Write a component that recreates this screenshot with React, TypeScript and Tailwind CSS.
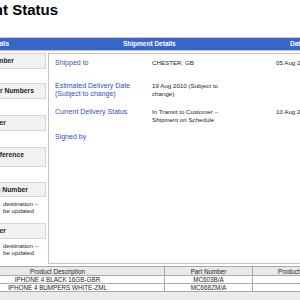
const leftBoxes = [
  { label: "Web Order Number", cut: "w-[14px]", box: "mt-[2px] h-[16px]" },
  { label: "Sales Order Numbers", cut: "w-[34px]", box: "mt-[14px] h-[16px]" },
  { label: "Customer", cut: "w-[6px]", box: "mt-[16px] h-[16px]" },
]

const shipmentRows = [
  { label: ["Shipped to"], value: ["CHESTER, GB"], date: "05 Aug 2010", row: "h-[23px]" },
  {
    label: ["Estimated Delivery Date", "(Subject to change)"],
    value: ["19 Aug 2010 (Subject to", "change)"],
    date: "",
    row: "h-[26px]",
  },
  {
    label: ["Current Delivery Status"],
    value: ["In Transit to Customer –", "Shipment on Schedule"],
    date: "10 Aug 2010",
    row: "h-[25px]",
  },
  { label: ["Signed by"], value: [], date: "", row: "h-[20px]" },
]

const products = [
  { desc: "IPHONE 4 BLACK 16GB-GBR", part: "MC603B/A", qty: "1" },
  { desc: "IPHONE 4 BUMPERS WHITE-ZML", part: "MC668ZM/A", qty: "1" },
]

// text anchored at its right edge, left part runs off the page
function Cut({ w, children }: { w: string; children: React.ReactNode }) {
  return <div className={`flex shrink-0 justify-end overflow-hidden whitespace-nowrap ${w}`}>{children}</div>
}

function LeftBox({ label, cut, box }: { label: string; cut: string; box: string }) {
  return (
    <div className={`flex w-[46px] items-center border border-l-0 border-[#d4d4d4] bg-[#f1f1f1] text-[6.8px] font-bold leading-[8px] ${box}`}>
      <Cut w={cut}>
        <span className="shrink-0">{label}</span>
      </Cut>
    </div>
  )
}

export default function App() {
  return (
    <div className="h-[300px] w-[300px] overflow-hidden bg-white font-['Liberation_Sans',Arial,sans-serif] text-[#1e1e1e]">
      <div className="h-[37px] pt-[1px]">
        <Cut w="w-[58px]">
          <h1 className="shrink-0 text-[15px] font-bold leading-[18px] text-black">Shipment Status</h1>
        </Cut>
      </div>

      <div className="flex h-[14px] items-center border-y border-t-[#c6c6c6] border-b-[#c0c0c0] bg-[#3866c9] text-[6.5px] font-bold text-white">
        <div className="w-[123px] shrink-0">
          <Cut w="w-[9px]">
            <span className="shrink-0">Order Details</span>
          </Cut>
        </div>
        <div className="w-[167px] shrink-0 whitespace-nowrap">Shipment Details</div>
        <div className="shrink-0 whitespace-nowrap">Date Shipped</div>
      </div>

      <div className="flex h-[214px]">
        <div className="flex w-[46px] shrink-0 flex-col">
          {leftBoxes.map((b) => (
            <LeftBox key={b.label} {...b} />
          ))}
          <div className="mt-[16px] flex h-[20px] w-[46px] items-start border border-l-0 border-[#d4d4d4] bg-[#f1f1f1] pt-[3px] text-[6.8px] font-bold leading-[8px]">
            <Cut w="w-[24px]">
              <span className="shrink-0">Customer Reference</span>
            </Cut>
          </div>
          <LeftBox label="Tracking Number" cut="w-[28px]" box="mt-[15px] h-[15px]" />
          <div className="mt-[3px] whitespace-nowrap pl-[3px] text-[6.2px] leading-[7px]">
            <p>destination –</p>
            <p>be updated</p>
          </div>
          <LeftBox label="Carrier" cut="w-[6px]" box="mt-[9px] h-[16px]" />
          <div className="mt-[3px] whitespace-nowrap pl-[3px] text-[6.2px] leading-[7px]">
            <p>destination –</p>
            <p>be updated</p>
          </div>
        </div>

        <div className="ml-[2px] mt-[2px] h-[211px] w-[290px] shrink-0 border border-[#c4c4c4] pl-[6px] pt-[5px]">
          {shipmentRows.map((r) => (
            <div key={r.label[0]} className={`flex ${r.row}`}>
              <div className="w-[97px] shrink-0 text-[7px] leading-[8px] text-[#3050c0]">
                {r.label.map((l) => (
                  <p key={l}>{l}</p>
                ))}
              </div>
              <div className="w-[124px] shrink-0 text-[6.2px] leading-[8px]">
                {r.value.map((v) => (
                  <p key={v}>{v}</p>
                ))}
              </div>
              <div className="shrink-0 whitespace-nowrap text-[6.2px] leading-[8px]">{r.date}</div>
            </div>
          ))}
        </div>
      </div>

      <div className="mt-[1px] overflow-hidden">
        <table className="-ml-[50px] w-[400px] table-fixed border-collapse text-center text-[6.3px] leading-[7px]">
          <colgroup>
            <col className="w-[214px]" />
            <col className="w-[88px]" />
            <col className="w-[98px]" />
          </colgroup>
          <thead>
            <tr className="h-[9px] bg-[#e9e9e9]">
              <th className="border border-[#a9a9a9] font-normal">Product Description</th>
              <th className="border border-[#a9a9a9] font-normal">Part Number</th>
              <th className="border border-[#a9a9a9] font-normal">Product Quantity</th>
            </tr>
          </thead>
          <tbody>
            {products.map((p) => (
              <tr key={p.part} className="h-[8px]">
                <td className="border border-[#a9a9a9]">{p.desc}</td>
                <td className="border border-[#a9a9a9]">{p.part}</td>
                <td className="border border-[#a9a9a9]">{p.qty}</td>
              </tr>
            ))}
          </tbody>
        </table>
      </div>
      <div className="h-[12px] bg-[#ebebeb]" />
    </div>
  )
}
